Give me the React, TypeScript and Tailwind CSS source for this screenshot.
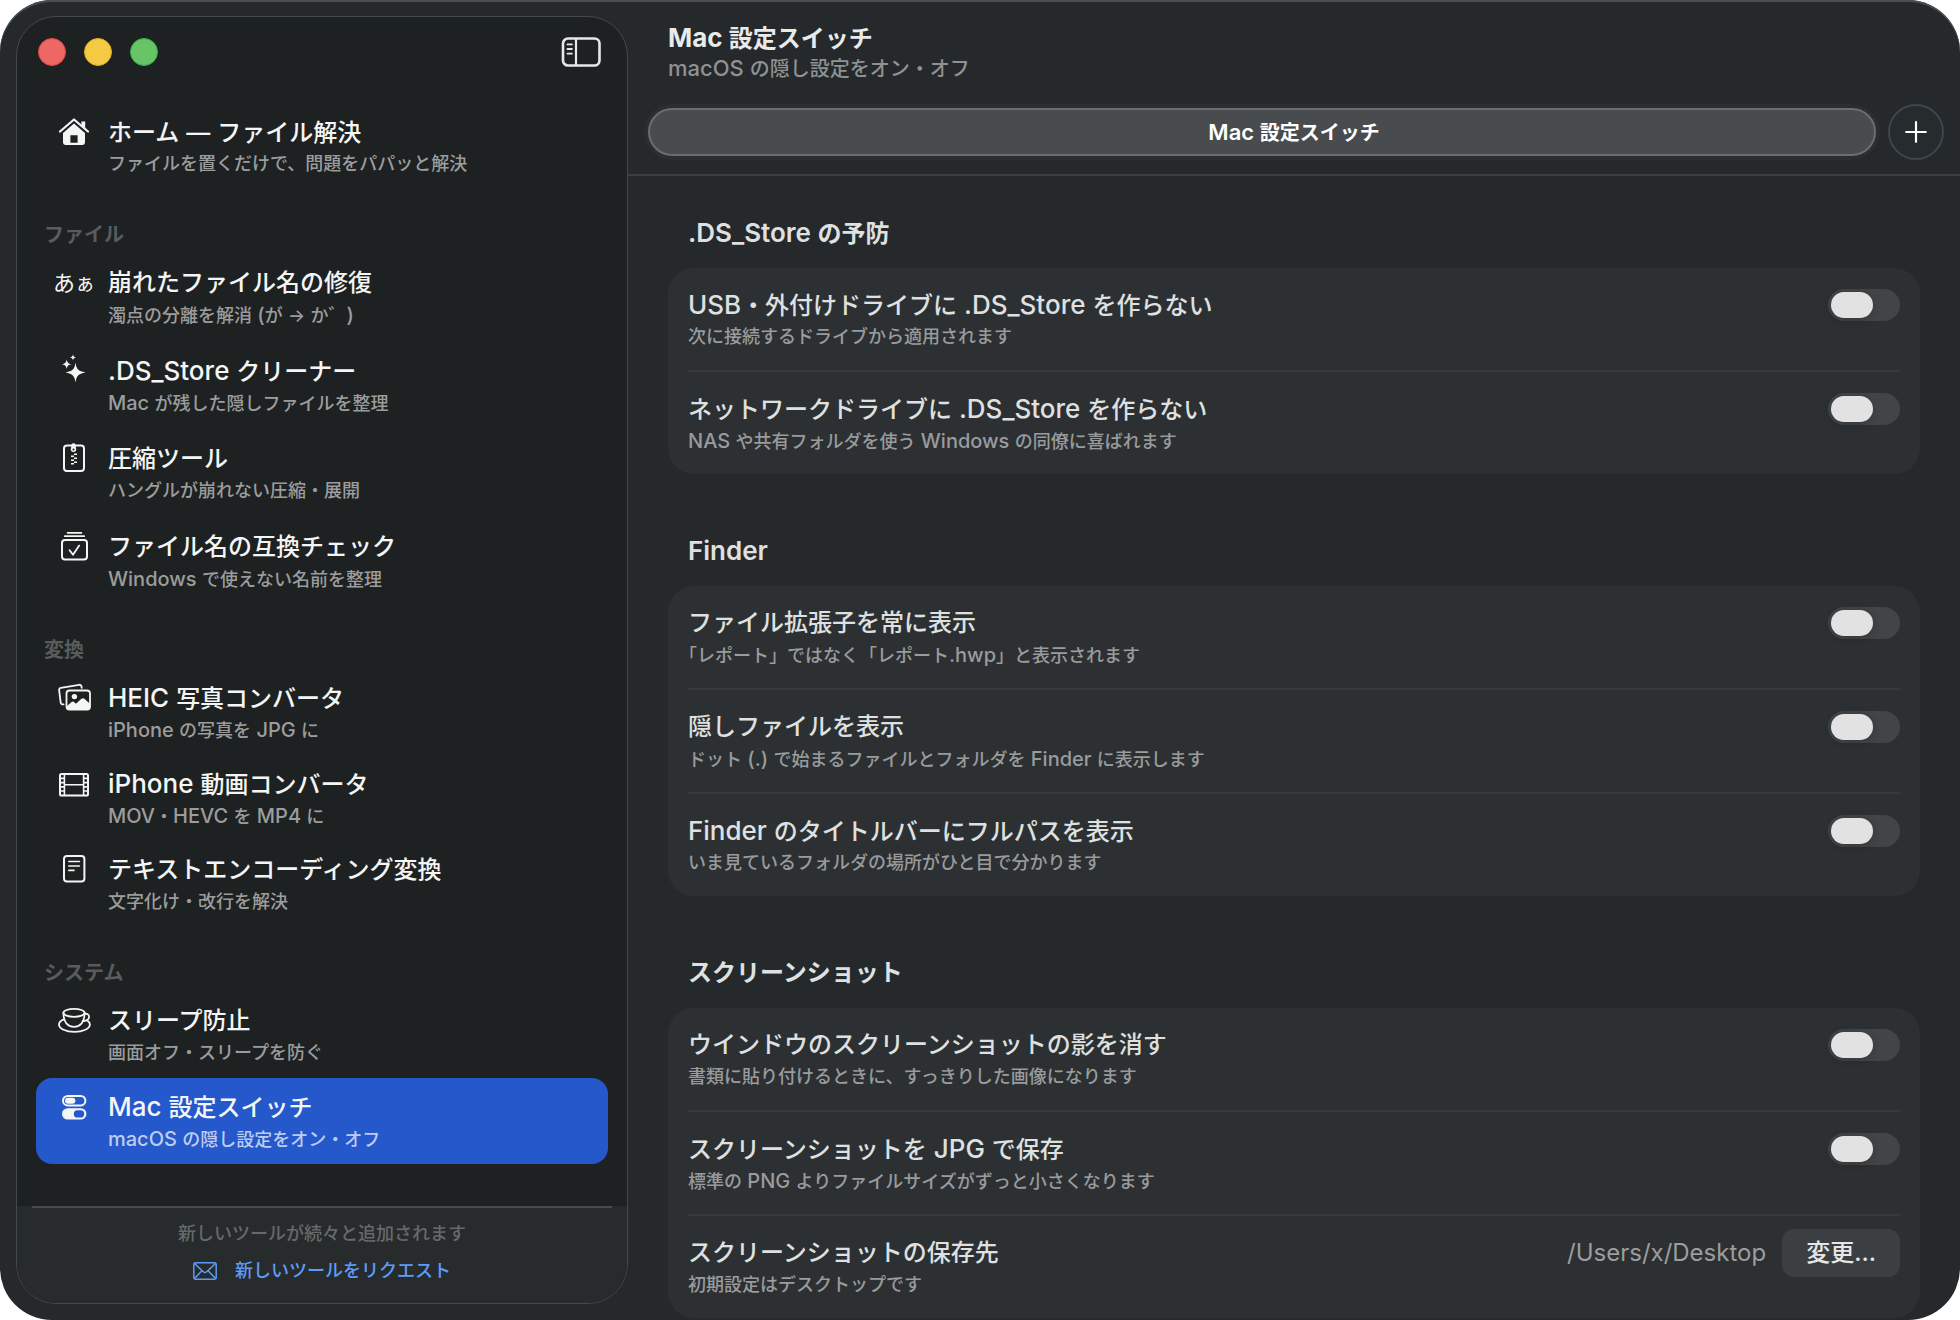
import { useState, type ReactNode } from 'react';
import clsx from 'clsx';

type Tool = {
  id: string;
  title: string;
  subtitle: string;
  icon: ReactNode;
};

type ToolGroup = {
  label?: string;
  spaced?: boolean;
  tools: Tool[];
};

type Setting = {
  id: string;
  title: string;
  subtitle: string;
  path?: string;
};

// Latin runs are set a little larger than the kana and kanji beside them
function Mixed({ text, latin }: { text: string; latin: string }) {
  return (
    <>
      {text.split(/([ -~]+)/).map((part, i) =>
        i % 2 === 1 ? (
          <span key={i} className={latin}>
            {part}
          </span>
        ) : (
          part
        )
      )}
    </>
  );
}

function Glyph({ children }: { children: ReactNode }) {
  return (
    <svg
      viewBox="0 0 40 32"
      className="h-8 w-10 overflow-visible"
      fill="none"
      stroke="currentColor"
      strokeWidth="2"
      strokeLinecap="round"
      strokeLinejoin="round"
      aria-hidden="true"
    >
      {children}
    </svg>
  );
}

const HomeIcon = (
  <Glyph>
    <path d="M6 15.5 20 3.5 34 15.5" strokeWidth="2.2" />
    <path
      d="M20 7.6 31 17V26.5a2.4 2.4 0 0 1-2.4 2.4H11.4A2.4 2.4 0 0 1 9 26.5V17Z M16.4 19.2h7.2v7.6h-7.2Z"
      fill="currentColor"
      fillRule="evenodd"
      stroke="none"
    />
    <path d="M27.4 5.6h3.8v7l-3.8-3.3Z" fill="currentColor" stroke="none" />
  </Glyph>
);

const KanaIcon = (
  <span
    className="flex h-8 w-10 items-baseline justify-center text-[22px] leading-8 whitespace-nowrap"
    aria-hidden="true"
  >
    あ<span className="text-[20px]">ぁ</span>
  </span>
);

const SparklesIcon = (
  <Glyph>
    <g fill="currentColor" stroke="none">
      <path d="M21.5 7.6c1 6.6 2.6 8.6 10 9.9-7.4 1.3-9 3.3-10 9.9-1-6.6-2.6-8.6-10-9.9 7.4-1.3 9-3.3 10-9.9Z" />
      <path d="M12.7 4.2c.5 3.3 1.4 4.4 4.9 5-3.5.6-4.4 1.7-4.9 5-.5-3.3-1.4-4.4-4.9-5 3.5-.6 4.4-1.7 4.9-5Z" />
      <path d="M19 -.7c.3 2.1.9 2.8 3.1 3.1-2.2.3-2.8 1-3.1 3.1-.3-2.1-.9-2.8-3.1-3.1 2.2-.3 2.8-1 3.1-3.1Z" />
    </g>
  </Glyph>
);

const ZipIcon = (
  <Glyph>
    <rect x="10" y="2.5" width="20" height="25.5" rx="3" />
    <path d="M17.6 1.6a2 2 0 0 1 3.8 0l.8 4.6a2.7 2.7 0 0 1-5.4 0Z" fill="currentColor" stroke="none" />
    <circle cx="19.5" cy="6.6" r="1" fill="#1e2222" stroke="none" />
    <path
      d="M20 11.3h3M17 13.3h3M20 15.3h3M17 17.3h3M20 19.3h3M17 20.8h3"
      strokeWidth="1.5"
      strokeLinecap="butt"
    />
  </Glyph>
);

const CheckStackIcon = (
  <Glyph>
    <rect x="8" y="9" width="25" height="19.5" rx="3" />
    <path d="M10.8 5.2h19.4M13.6 1.8h13.8" strokeWidth="1.7" />
    <path d="M15.6 19.2l3.4 4.6 6.2-9.2" strokeWidth="1.8" />
  </Glyph>
);

const PhotosIcon = (
  <Glyph>
    <path
      d="M9.6 22.3 9 22.4a2 2 0 0 1-2.3-1.7L5.1 8.2a2 2 0 0 1 1.7-2.3L25.2 2.8a2 2 0 0 1 2.3 1.7l.2 1.4"
      strokeWidth="1.8"
    />
    <rect x="12.5" y="8.5" width="23.5" height="19" rx="3" strokeWidth="1.8" />
    <circle cx="20.4" cy="14.6" r="2.7" fill="currentColor" stroke="none" />
    <path
      d="M12.5 24.6l5-4.6c.9-.8 1.7-.8 2.5 0l2 1.8 5.4-5c1-.9 2-.9 3 0l5.8 5.2v3a3 3 0 0 1-3 3H15.5a3 3 0 0 1-3-3Z"
      fill="currentColor"
      stroke="none"
    />
  </Glyph>
);

const FilmIcon = (
  <Glyph>
    <rect x="6" y="6" width="28" height="21.5" rx="1.6" />
    <path d="M10.4 6v21.5M29.6 6v21.5M10.4 16.7h19.2" strokeWidth="1.6" strokeLinecap="butt" />
    <path
      d="M6 10.4h4.4M6 14.6h4.4M6 18.8h4.4M6 23h4.4M29.6 10.4H34M29.6 14.6H34M29.6 18.8H34M29.6 23H34"
      strokeWidth="1.7"
      strokeLinecap="butt"
    />
  </Glyph>
);

const DocumentIcon = (
  <Glyph>
    <rect x="10" y="2" width="20.4" height="25.4" rx="3" />
    <path d="M14.8 7.5h10.6M14.8 12h10.6M14.8 16.4h5.2" strokeWidth="1.6" />
  </Glyph>
);

const CupIcon = (
  <Glyph>
    <g strokeWidth="1.8">
      <ellipse cx="20" cy="7.8" rx="10.6" ry="4" />
      <path d="M9.4 7.8c0 8.8 4 14 10.6 14s10.6-5.2 10.6-14" />
      <path d="M30.5 9c2.4-.8 4.6.4 4.6 2.7 0 3-2.8 4.7-6.4 4.2" />
      <path d="M10.3 14.2C6.900 15.5 5 17.3 5 19.5c0 4.2 6.8 7.4 15.4 7.4s15.5-3.2 15.5-7.4c0-1.6-1-3-2.9-4.2" />
    </g>
  </Glyph>
);

const SwitchesIcon = (
  <Glyph>
    <rect x="9" y="4.9" width="22.4" height="9.6" rx="4.8" />
    <rect x="11" y="6.7" width="10.4" height="6" rx="3" fill="currentColor" stroke="none" />
    <rect x="8" y="17.2" width="24.4" height="11.4" rx="5.7" fill="currentColor" stroke="none" />
    <rect x="19.8" y="19.2" width="10.4" height="7.4" rx="3.7" fill="#2458cb" stroke="none" />
  </Glyph>
);

const toolGroups: ToolGroup[] = [
  {
    tools: [
      {
        id: 'home',
        title: 'ホーム — ファイル解決',
        subtitle: 'ファイルを置くだけで、問題をパパッと解決',
        icon: HomeIcon,
      },
    ],
  },
  {
    label: 'ファイル',
    spaced: true,
    tools: [
      { id: 'names', title: '崩れたファイル名の修復', subtitle: '濁点の分離を解消 (が → か゛)', icon: KanaIcon },
      { id: 'cleaner', title: '.DS_Store クリーナー', subtitle: 'Mac が残した隠しファイルを整理', icon: SparklesIcon },
      { id: 'zip', title: '圧縮ツール', subtitle: 'ハングルが崩れない圧縮・展開', icon: ZipIcon },
      { id: 'compat', title: 'ファイル名の互換チェック', subtitle: 'Windows で使えない名前を整理', icon: CheckStackIcon },
    ],
  },
  {
    label: '変換',
    tools: [
      { id: 'heic', title: 'HEIC 写真コンバータ', subtitle: 'iPhone の写真を JPG に', icon: PhotosIcon },
      { id: 'video', title: 'iPhone 動画コンバータ', subtitle: 'MOV・HEVC を MP4 に', icon: FilmIcon },
      { id: 'encoding', title: 'テキストエンコーディング変換', subtitle: '文字化け・改行を解決', icon: DocumentIcon },
    ],
  },
  {
    label: 'システム',
    tools: [
      { id: 'sleep', title: 'スリープ防止', subtitle: '画面オフ・スリープを防ぐ', icon: CupIcon },
      { id: 'switches', title: 'Mac 設定スイッチ', subtitle: 'macOS の隠し設定をオン・オフ', icon: SwitchesIcon },
    ],
  },
];

const sections: { heading: string; settings: Setting[] }[] = [
  {
    heading: '.DS_Store の予防',
    settings: [
      { id: 'ds-usb', title: 'USB・外付けドライブに .DS_Store を作らない', subtitle: '次に接続するドライブから適用されます' },
      { id: 'ds-net', title: 'ネットワークドライブに .DS_Store を作らない', subtitle: 'NAS や共有フォルダを使う Windows の同僚に喜ばれます' },
    ],
  },
  {
    heading: 'Finder',
    settings: [
      { id: 'ext', title: 'ファイル拡張子を常に表示', subtitle: '「レポート」ではなく「レポート.hwp」と表示されます' },
      { id: 'hidden', title: '隠しファイルを表示', subtitle: 'ドット (.) で始まるファイルとフォルダを Finder に表示します' },
      { id: 'fullpath', title: 'Finder のタイトルバーにフルパスを表示', subtitle: 'いま見ているフォルダの場所がひと目で分かります' },
    ],
  },
  {
    heading: 'スクリーンショット',
    settings: [
      { id: 'shadow', title: 'ウインドウのスクリーンショットの影を消す', subtitle: '書類に貼り付けるときに、すっきりした画像になります' },
      { id: 'jpg', title: 'スクリーンショットを JPG で保存', subtitle: '標準の PNG よりファイルサイズがずっと小さくなります' },
      { id: 'location', title: 'スクリーンショットの保存先', subtitle: '初期設定はデスクトップです', path: '/Users/x/Desktop' },
    ],
  },
];

function ToolItem({ tool, active, onSelect }: { tool: Tool; active: boolean; onSelect: () => void }) {
  return (
    <button
      type="button"
      onClick={onSelect}
      aria-current={active ? 'page' : undefined}
      className={clsx(
        'flex w-full items-start gap-[14px] rounded-2xl py-[13px] pl-[18px] text-left text-[#f4f5f5]',
        active && 'bg-[#2458cb]'
      )}
    >
      {tool.icon}
      <span className="flex min-w-0 flex-col gap-1">
        <span className="h-8 text-2xl leading-8 font-medium whitespace-nowrap">
          <Mixed text={tool.title} latin="text-[26px]" />
        </span>
        <span
          className={clsx(
            'h-6 text-lg leading-6 font-medium whitespace-nowrap',
            active ? 'text-[#bdcdf1]' : 'text-[#9b9d9d]'
          )}
        >
          <Mixed text={tool.subtitle} latin="text-[20px]" />
        </span>
      </span>
    </button>
  );
}

function Sidebar() {
  const [current, setCurrent] = useState('switches');

  return (
    <aside className="flex w-[612px] shrink-0 flex-col overflow-hidden rounded-[40px] border border-[#434a4c] bg-[#1e2122]">
      {/* Window controls */}
      <div className="flex h-[70px] items-center justify-between pr-[26px] pl-[21px]">
        <div className="flex gap-[18px]">
          <button type="button" aria-label="閉じる" className="size-7 rounded-full border border-[#dd4a4a] bg-[#ee6764]" />
          <button type="button" aria-label="しまう" className="size-7 rounded-full border border-[#dfac1c] bg-[#f4c944]" />
          <button type="button" aria-label="拡大" className="size-7 rounded-full border border-[#3fae43] bg-[#67c467]" />
        </div>
        <button type="button" aria-label="サイドバーを切り替え" className="text-[#e6e7e7]">
          <svg viewBox="0 0 40 30" className="h-[30px] w-10" fill="none" stroke="currentColor" strokeLinecap="round">
            <rect x="2" y="1.5" width="36.5" height="27" rx="5" strokeWidth="2.6" />
            <path d="M15 2v26" strokeWidth="2.2" />
            <path d="M6.5 7.4h4.4M6.5 12h4.4M6.5 16.6h4.4" strokeWidth="1.9" />
          </svg>
        </button>
      </div>

      <nav className="flex-1 px-[19px] pt-4">
        {toolGroups.map((group) => (
          <div key={group.tools[0].id}>
            {group.label && (
              <h2 className="flex h-[65px] items-end pb-[7px] pl-2 text-xl leading-6 font-semibold text-[#595c5d]">
                {group.label}
              </h2>
            )}
            <div className={clsx('flex flex-col', group.spaced && 'gap-0.5')}>
              {group.tools.map((tool) => (
                <ToolItem
                  key={tool.id}
                  tool={tool}
                  active={tool.id === current}
                  onSelect={() => setCurrent(tool.id)}
                />
              ))}
            </div>
          </div>
        ))}
      </nav>

      <footer className="bg-[#272b2c] px-[15px] pb-5">
        <div className="h-0.5 bg-[#454a4b]" />
        <div className="flex flex-col items-center gap-[13px] pt-[14px] text-lg leading-6 font-medium">
          <p className="text-[#66696a]">新しいツールが続々と追加されます</p>
          <a href="mailto:" className="flex items-center gap-[18px] text-[#5d9bf8]">
            <svg viewBox="0 0 24 18" className="h-[18px] w-6" fill="none" stroke="currentColor" strokeWidth="1.5">
              <rect x=".8" y=".8" width="22.4" height="16.4" rx="2" />
              <path d="M1.5 1.5l8.8 8.3c1.1 1 2.3 1 3.4 0l8.8-8.3M1.5 16.5l7.4-7.7M22.5 16.5l-7.4-7.7" />
            </svg>
            新しいツールをリクエスト
          </a>
        </div>
      </footer>
    </aside>
  );
}

function SettingRow({ setting }: { setting: Setting }) {
  const [on, setOn] = useState(false);

  return (
    <li className="flex items-start justify-between border-t-2 border-[#363a3c] py-[21px] first:border-t-0">
      <div className="flex flex-col gap-1">
        <label htmlFor={setting.id} className="h-8 text-2xl leading-8 font-medium text-[#dfe0e0]">
          <Mixed text={setting.title} latin="text-[26px]" />
        </label>
        <p className="h-6 text-lg leading-6 font-medium text-[#999b9c] [text-spacing-trim:trim-start]">
          <Mixed text={setting.subtitle} latin="text-[20px]" />
        </p>
      </div>
      <div className="flex h-8 items-center gap-4">
        {setting.path ? (
          <>
            <span className="text-2xl text-[#9b9d9e]">{setting.path}</span>
            <button
              id={setting.id}
              type="button"
              className="h-12 rounded-xl bg-[#3b3f41] px-6 text-2xl font-medium text-[#e6e7e7]"
            >
              変更...
            </button>
          </>
        ) : (
          <input
            id={setting.id}
            type="checkbox"
            role="switch"
            checked={on}
            onChange={(e) => setOn(e.target.checked)}
            className="flex h-8 w-[72px] appearance-none items-center rounded-full bg-[#434445] px-[3px] before:h-[26px] before:w-[42px] before:rounded-full before:bg-[#e2e2e2] before:shadow-[0_2px_10px_rgba(0,0,0,0.2)] checked:justify-end checked:bg-[#2458cb]"
          />
        )}
      </div>
    </li>
  );
}

export default function App() {
  return (
    <div className="flex min-h-screen overflow-hidden rounded-[52px] bg-[#25292b] font-['Inter','Noto_Sans_CJK_JP',sans-serif] shadow-[inset_0_2px_0_#484d50]">
      <div className="flex py-4 pl-4">
        <Sidebar />
      </div>

      <main className="flex min-w-0 flex-1 flex-col">
        {/* Title and tab bar */}
        <header className="border-b-2 border-[#3a3e40] px-4 pb-[14px]">
          <div className="flex flex-col pt-[22px] pl-6">
            <h1 className="h-8 text-2xl leading-8 font-bold text-[#e9eaea]">
              <Mixed text="Mac 設定スイッチ" latin="text-[26px]" />
            </h1>
            <p className="h-7 text-xl leading-7 font-medium text-[#8f9293]">
              <Mixed text="macOS の隠し設定をオン・オフ" latin="text-[22px]" />
            </p>
          </div>
          <div className="mt-[22px] flex gap-2">
            <div role="tablist" className="flex flex-1 rounded-full bg-[#2a2e30] p-1">
              <button
                type="button"
                role="tab"
                aria-selected="true"
                className="h-12 flex-1 rounded-full border-2 border-[#6a6e70] bg-[#494c4e] pl-16 text-xl font-semibold text-white"
              >
                <Mixed text="Mac 設定スイッチ" latin="text-[22px]" />
              </button>
            </div>
            <button
              type="button"
              aria-label="新規タブ"
              className="flex size-14 items-center justify-center rounded-full border-2 border-[#3c474d] bg-[#262b2d] text-white"
            >
              <svg viewBox="0 0 22 22" className="size-[22px]" stroke="currentColor" strokeWidth="2.2" strokeLinecap="round">
                <path d="M11 1.2v19.6M1.2 11h19.6" />
              </svg>
            </button>
          </div>
        </header>

        {/* Settings */}
        <div className="flex flex-col gap-[61px] px-10 pt-[41px] pb-0.5">
          {sections.map((section) => (
            <section key={section.heading}>
              <h2 className="mb-[19px] h-8 pl-5 text-2xl leading-8 font-semibold text-[#dfe0e0]">
                <Mixed text={section.heading} latin="text-[26px]" />
              </h2>
              <ul className="rounded-[26px] bg-[#2c3032] px-5">
                {section.settings.map((setting) => (
                  <SettingRow key={setting.id} setting={setting} />
                ))}
              </ul>
            </section>
          ))}
        </div>
      </main>
    </div>
  );
}
